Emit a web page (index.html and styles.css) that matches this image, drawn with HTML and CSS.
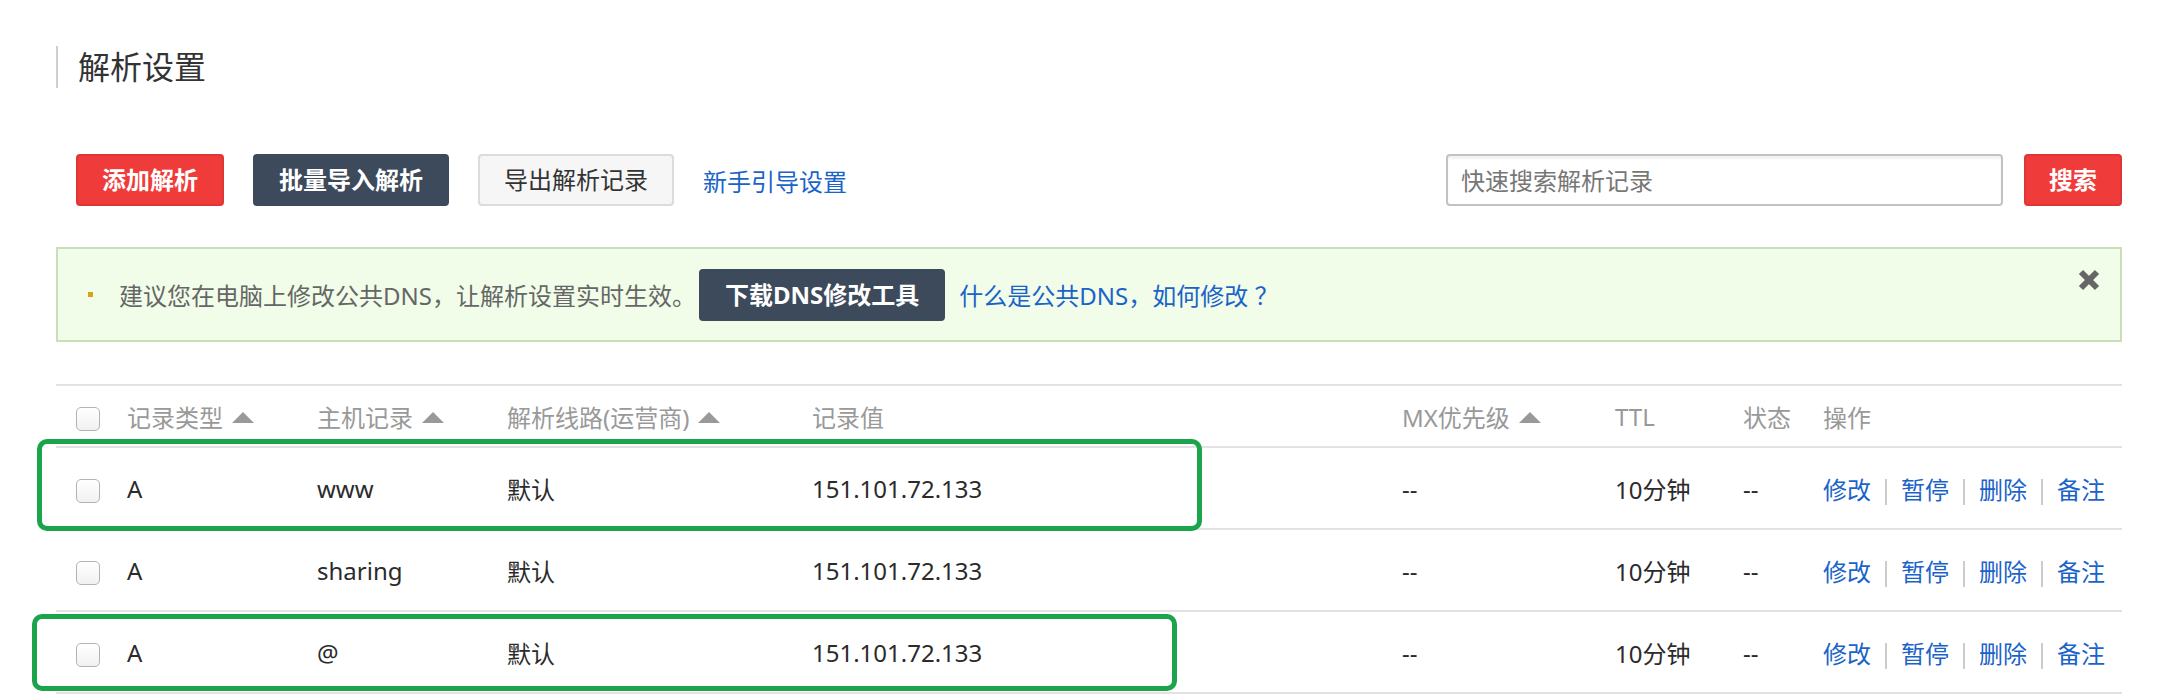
FILE: index.html
```html
<!DOCTYPE html>
<html lang="zh-CN">
<head>
<meta charset="utf-8">
<title>解析设置</title>
<link rel="stylesheet" href="styles.css">
</head>
<body>
<div class="page">
  <h1 class="title">解析设置</h1>

  <div class="toolbar">
    <div class="actions">
      <button class="btn btn-red">添加解析</button>
      <button class="btn btn-dark">批量导入解析</button>
      <button class="btn btn-light">导出解析记录</button>
      <a class="link guide">新手引导设置</a>
    </div>
    <div class="search">
      <input class="search-input" type="text" placeholder="快速搜索解析记录">
      <button class="btn btn-red btn-search">搜索</button>
    </div>
  </div>

  <div class="alert">
    <span class="bullet"></span>
    <span class="alert-text">建议您在电脑上修改公共DNS，让解析设置实时生效。</span>
    <button class="btn btn-dark btn-tool">下载DNS修改工具</button>
    <a class="link alert-link">什么是公共DNS，如何修改 ？</a>
    <span class="close">
      <svg width="24" height="24" viewBox="0 0 24 24"><path d="M4 4 L20 20 M20 4 L4 20" stroke="#666" stroke-width="6" fill="none"/></svg>
    </span>
  </div>

  <table class="records">
    <colgroup>
      <col class="c0"><col class="c1"><col class="c2"><col class="c3"><col class="c4"><col class="c5"><col class="c6"><col class="c7"><col class="c8">
    </colgroup>
    <thead>
      <tr>
        <th class="cbcell"><span class="cb"></span></th>
        <th>记录类型<span class="sort"></span></th>
        <th>主机记录<span class="sort"></span></th>
        <th>解析线路(运营商)<span class="sort"></span></th>
        <th>记录值</th>
        <th>MX优先级<span class="sort"></span></th>
        <th>TTL</th>
        <th>状态</th>
        <th>操作</th>
      </tr>
    </thead>
    <tbody>
      <tr>
        <td class="cbcell"><span class="cb"></span></td>
        <td>A</td><td>www</td><td>默认</td><td>151.101.72.133</td><td>--</td><td>10分钟</td><td>--</td>
        <td><a class="link">修改</a><span class="sep"></span><a class="link">暂停</a><span class="sep"></span><a class="link">删除</a><span class="sep"></span><a class="link">备注</a></td>
      </tr>
      <tr>
        <td class="cbcell"><span class="cb"></span></td>
        <td>A</td><td>sharing</td><td>默认</td><td>151.101.72.133</td><td>--</td><td>10分钟</td><td>--</td>
        <td><a class="link">修改</a><span class="sep"></span><a class="link">暂停</a><span class="sep"></span><a class="link">删除</a><span class="sep"></span><a class="link">备注</a></td>
      </tr>
      <tr>
        <td class="cbcell"><span class="cb"></span></td>
        <td>A</td><td>@</td><td>默认</td><td>151.101.72.133</td><td>--</td><td>10分钟</td><td>--</td>
        <td><a class="link">修改</a><span class="sep"></span><a class="link">暂停</a><span class="sep"></span><a class="link">删除</a><span class="sep"></span><a class="link">备注</a></td>
      </tr>
    </tbody>
  </table>

  <div class="mark mark-1"></div>
  <div class="mark mark-2"></div>
</div>
</body>
</html>
```

FILE: styles.css
```css
html, body {
  margin: 0;
  padding: 0;
  background: #fff;
}
body {
  font-family: "Noto Sans", "Noto Sans CJK SC", sans-serif;
  font-size: 24px;
  color: #333;
}
.page {
  position: relative;
  width: 2066px;
  padding: 46px 36px 0 56px;
}
.title {
  margin: 0;
  height: 42px;
  line-height: 42px;
  border-left: 2px solid #cfcfcf;
  padding-left: 20px;
  font-size: 32px;
  font-weight: normal;
  color: #333;
}
.toolbar {
  margin-top: 66px;
  padding-left: 20px;
  display: flex;
  align-items: center;
  justify-content: space-between;
  height: 52px;
}
.actions {
  display: flex;
  align-items: center;
  gap: 29px;
}
.search {
  display: flex;
  align-items: center;
  gap: 21px;
}
.btn {
  font-family: "Noto Sans", "Noto Sans CJK SC", sans-serif;
  font-size: 24px;
  height: 52px;
  line-height: 48px;
  padding: 0 24px;
  border-radius: 4px;
  border: 2px solid transparent;
  box-sizing: border-box;
  cursor: pointer;
  white-space: nowrap;
}
.btn-red {
  background: #f03b3b;
  border-color: #e03535;
  color: #fff;
  font-weight: bold;
}
.btn-dark {
  background: #3c4a5c;
  border-color: #3c4a5c;
  color: #fff;
  font-weight: bold;
}
.btn-light {
  background: #f6f6f6;
  border-color: #dcdcdc;
  color: #333;
}
.link {
  color: #1a63c9;
  text-decoration: none;
  cursor: pointer;
}
.search-input {
  width: 557px;
  height: 52px;
  box-sizing: border-box;
  border: 2px solid #c2c2c2;
  border-radius: 4px;
  padding: 0 13px;
  font-family: "Noto Sans", "Noto Sans CJK SC", sans-serif;
  font-size: 24px;
  color: #333;
  box-shadow: inset 0 3px 2px rgba(0, 0, 0, 0.05);
  outline: none;
}
.search-input::placeholder {
  color: #777;
}
.btn-search {
  width: 98px;
  padding: 0;
}
.alert {
  margin-top: 41px;
  height: 95px;
  box-sizing: border-box;
  border: 2px solid #c9dfba;
  background: #f1fde9;
  padding: 0 19px 0 30px;
  display: flex;
  align-items: center;
}
.bullet {
  width: 5px;
  height: 5px;
  background: #d6a41a;
  margin-right: 26px;
  flex: none;
}
.alert-text {
  color: #666;
}
.btn-tool {
  margin-left: 3px;
  padding: 0 24px;
}
.alert-link {
  margin-left: 14px;
}
.close {
  margin-left: auto;
  align-self: flex-start;
  margin-top: 19px;
  width: 24px;
  height: 24px;
  display: block;
}
.close svg {
  display: block;
}
.records {
  margin-top: 42px;
  width: 2066px;
  border-collapse: collapse;
  table-layout: fixed;
  border-top: 2px solid #e2e2e2;
}
.c0 { width: 71px; }
.c1 { width: 190px; }
.c2 { width: 190px; }
.c3 { width: 305px; }
.c4 { width: 590px; }
.c5 { width: 213px; }
.c6 { width: 128px; }
.c7 { width: 80px; }
.c8 { width: 299px; }
.records th,
.records td {
  padding: 0;
  text-align: left;
  vertical-align: middle;
  border-bottom: 2px solid #e2e2e2;
  white-space: nowrap;
}
.records th {
  height: 60px;
  font-weight: normal;
  color: #999;
}
.records td {
  height: 80px;
  color: #2b2b2b;
}
.records .cbcell {
  padding-left: 20px;
}
.cb {
  display: inline-block;
  width: 24px;
  height: 24px;
  box-sizing: border-box;
  border: 1.5px solid #b3b3b3;
  border-radius: 5px;
  background: linear-gradient(#ffffff, #f1f1f1);
  vertical-align: middle;
}
.sort {
  display: inline-block;
  width: 0;
  height: 0;
  border-left: 11px solid transparent;
  border-right: 11px solid transparent;
  border-bottom: 11px solid #999;
  margin-left: 9px;
  vertical-align: 4px;
}
.sep {
  display: inline-block;
  width: 2px;
  height: 26px;
  background: #cccccc;
  margin: 0 14px;
  vertical-align: middle;
}
.mark {
  position: absolute;
  box-sizing: border-box;
  border: 5px solid #1ba44b;
  border-radius: 10px;
  pointer-events: none;
}
.mark-1 {
  left: 37px;
  top: 439px;
  width: 1165px;
  height: 92px;
}
.mark-2 {
  left: 32px;
  top: 614px;
  width: 1145px;
  height: 77px;
}
```
